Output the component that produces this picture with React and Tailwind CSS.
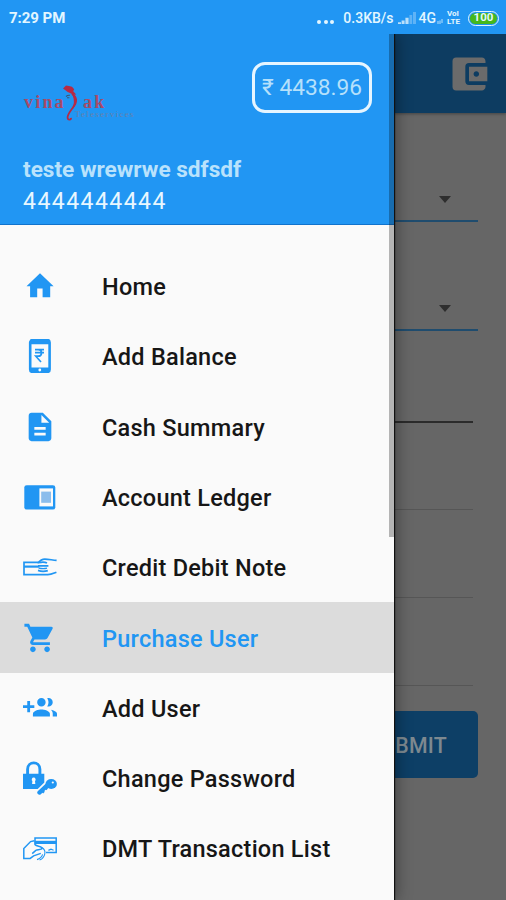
import React from 'react'
import { MdAccountBalanceWallet, MdDescription, MdShoppingCart } from 'react-icons/md'

function HomeIcon() {
  return (
    <svg viewBox="0 0 34 34" className="size-[34px]" fill="currentColor">
      <path d="M14.2 28.2v-8.6h5.4v8.6h7.6V17.3h3.4L17 4.2 3.5 17.3h3.6v10.9z" />
    </svg>
  )
}

function PhoneRupeeIcon() {
  return (
    <svg viewBox="0 0 34 34" className="size-[34px]" fill="none" stroke="currentColor">
      <rect x="7.2" y="1.1" width="19.4" height="31.8" rx="2.4" strokeWidth="2.6" />
      <path d="M7 3h20M7 30.6h20" strokeWidth="4.4" />
      <path d="M12 10.6h9M12 13.6h9M12.6 10.6h2.6c4.4 0 4.4 6.6 0 6.6h-2.4l5.2 5.8" strokeWidth="1.7" />
      <circle cx="16.8" cy="31" r="1.4" fill="#fafafa" stroke="none" />
    </svg>
  )
}

function LedgerIcon() {
  return (
    <svg viewBox="0 0 34 34" className="size-[34px]">
      <rect x="1.3" y="5.2" width="31" height="24.4" rx="2.4" fill="currentColor" />
      <rect x="16.4" y="8.4" width="13.6" height="18" fill="#fafafa" />
      <rect x="18.2" y="11.6" width="9.8" height="11.2" fill="#8bbdec" />
    </svg>
  )
}

function CardHandIcon() {
  return (
    <svg viewBox="0 0 34 34" className="size-[34px]" fill="none" stroke="currentColor" strokeWidth="1.7">
      <path d="M15.5 12.3H1v12.3h23.6c3 .1 5-.9 8.8-2.4" />
      <path d="M1 16.6h15.4" strokeWidth="2.2" />
      <path d="M14.6 13.3c2.6-3 4.4-4.2 7.2-4.2 4 0 7.4 1 11.8 1.3" />
      <path d="M16 12.6c3-.8 5.4-1 8 .4M15 15.8h10.4M15 20.4c3.2 1.2 6.6 1.2 9.8.2" />
      <path d="M15.6 18.2c3 .6 5.6.8 8.4 0" strokeWidth="1.2" />
    </svg>
  )
}

function GroupAddIcon() {
  return (
    <svg viewBox="0 0 24 24" className="size-[34px]" fill="currentColor">
      <path d="M8 10H5V7H3v3H0v2h3v3h2v-3h3v-2zm10 1c1.66 0 2.99-1.34 2.99-3S19.66 5 18 5c-.32 0-.63.05-.91.14.57.81.9 1.79.9 2.86s-.34 2.04-.9 2.86c.28.09.59.14.91.14zm-5 0c1.66 0 2.99-1.34 2.99-3S14.66 5 13 5c-1.66 0-3 1.34-3 3s1.34 3 3 3zm6.62 2.16c.83.73 1.38 1.66 1.38 2.84v2h3v-2c0-1.54-2.37-2.49-4.38-2.84zM13 13c-2 0-6 1-6 3v2h12v-2c0-2-4-3-6-3z" />
    </svg>
  )
}

function LockKeyIcon() {
  return (
    <svg viewBox="0 0 34 34" className="size-[34px]">
      <path d="M4.6 13V8.2c0-8.4 12.3-8.4 12.3 0V13" fill="none" stroke="currentColor" strokeWidth="2.9" />
      <path d="M0 12.8h21.3v8.6l-6.6 6.6H0z" fill="currentColor" />
      <path d="M10.7 16.6a2 2 0 0 1 1.3 3.5l.3 2.9H9.1l.3-2.9a2 2 0 0 1 1.3-3.5z" fill="#fafafa" />
      <path d="M26 22.6 16.4 31.6" stroke="currentColor" strokeWidth="4.2" strokeLinecap="round" />
      <path d="m19 29.6 2 2M22.4 26.6l1.8 1.8" stroke="currentColor" strokeWidth="2.4" />
      <ellipse cx="28.2" cy="23" rx="5.7" ry="5" fill="currentColor" />
      <circle cx="29.8" cy="21.5" r="1.1" fill="#fafafa" />
    </svg>
  )
}

function TransferIcon() {
  return (
    <svg viewBox="0 0 34 34" className="size-[34px]" fill="none" stroke="currentColor" strokeWidth="1.5">
      <path d="M12 13V6h21.2v14.6H23" />
      <path d="M11.6 10.4h21.6" strokeWidth="3.2" />
      <path d="M11.4 8.7 7.6 9.6.8 16.6v9.8h6.4l3.4-2.6 7.2-2.4" />
      <path d="M12 12.6c2 2 5.4 1.2 6.8 3.2 1 1.8-3.4 1.8-6 2.6l-3.6 3.2" />
      <path d="M18.8 15.6c2.4 1.4 3.6 3.6 3 6.2-.6 2.8-2.6 5.2-5.2 6.2M14 27.6c3-.8 4.8-2.6 5.6-5.2" strokeWidth="1.1" />
      <path d="M25.4 18.4l2.6-1.2 2.6 1" strokeWidth="1.2" />
    </svg>
  )
}

const menuItems = [
  { label: 'Home', icon: <HomeIcon /> },
  { label: 'Add Balance', icon: <PhoneRupeeIcon /> },
  { label: 'Cash Summary', icon: <MdDescription className="size-[34px]" /> },
  { label: 'Account Ledger', icon: <LedgerIcon /> },
  { label: 'Credit Debit Note', icon: <CardHandIcon /> },
  { label: 'Purchase User', icon: <MdShoppingCart className="size-[34px]" />, active: true },
  { label: 'Add User', icon: <GroupAddIcon /> },
  { label: 'Change Password', icon: <LockKeyIcon /> },
  { label: 'DMT Transaction List', icon: <TransferIcon /> },
]

function StatusBar() {
  return (
    <div className="h-[34px] shrink-0 bg-[#2196f3] flex items-center justify-between pl-[9px] pr-[7px] pt-[2px] text-[#e3f6ff] font-bold">
      <span className="text-[15px] tracking-[-0.05px]">7:29 PM</span>
      <div className="flex items-center">
        <div className="flex gap-[2.5px] mr-[9px] mt-[8px]">
          <span className="size-[4px] rounded-full bg-[#e3f6ff]"></span>
          <span className="size-[4px] rounded-full bg-[#e3f6ff]"></span>
          <span className="size-[4px] rounded-full bg-[#e3f6ff]"></span>
        </div>
        <span className="text-[14px] font-medium">0.3KB/s</span>
        <svg viewBox="0 0 18 12" className="w-[18px] h-[12px] ml-[4px] mr-[3px]">
          <path d="M0 12v-1.8h3V12zM3.6 12V8.4h3V12zM7.4 12V5.8h3.2V12z" fill="#b9e0fb" />
          <path d="M11.4 12V3h2.8v9zM15 12V0h3v12z" fill="#5fb3f6" />
        </svg>
        <span className="text-[14px] font-medium">4G</span>
        <svg viewBox="0 0 6 5" className="w-[6px] h-[5px] ml-[1px] mr-[4px] mt-[7px]" stroke="#b9e0fb" fill="none">
          <path d="M1 5V2M3 5V1.5M5 4V0" />
        </svg>
        <div className="w-[15px] mr-[6px] text-[8px] leading-none">
          <p>VoI</p>
          <p>LTE</p>
        </div>
        <div className="w-[31px] h-[15px] rounded-full border-[1.5px] border-[#dff5ff] p-px">
          <div className="h-full rounded-full bg-[#45b81c] flex items-center justify-center text-[11.5px] leading-none">100</div>
        </div>
      </div>
    </div>
  )
}

function Logo() {
  return (
    <div className="relative w-[116px] h-[40px] text-[#a84a68]" style={{ fontFamily: '"Liberation Serif", serif' }}>
      <span className="absolute left-[1px] top-[8px] text-[18px] leading-[20px] tracking-[2.2px] font-bold">vina</span>
      <span className="absolute left-[60px] top-[8px] text-[18px] leading-[20px] tracking-[2.2px] font-bold">ak</span>
      <span className="absolute left-[52px] top-[26px] text-[8.5px] leading-[9px] tracking-[1.5px] text-[#6b7fa8]">Teleservices</span>
      <svg viewBox="0 0 20 40" className="absolute left-[39px] top-0 w-[20px] h-[40px]">
        <path d="M1 4.5 4 1.5l3 .5 3 .8 2.2 2.4-1 2 3 3.3-2.4.3C9 9 5.5 8.6 4.4 7z" fill="#b72a45" />
        <path d="M10 9.5c4.6 3.6 4 9.6.8 14.2C8 27.8 5.2 30.4 5.6 34c.4 2.4 3.6 2 3.4-.2" fill="none" stroke="#b72a45" strokeWidth="1.8" />
        <path d="M9.4 9c7.2 3 7.4 9.6 1.6 15.8 1.4-6 1.4-10.8-1.6-15.8z" fill="#b72a45" />
        <path d="M4 12.5c1.6-1.4 2.6-1.4 4-1.2M5 13.8h2.4" fill="none" stroke="#3b5573" strokeWidth="1.1" />
      </svg>
    </div>
  )
}

function Drawer() {
  return (
    <aside className="relative z-10 w-[394px] shrink-0 bg-[#fafafa] shadow-[1px_0_1px_#111,3px_0_14px_rgba(0,0,0,0.35)]">
      <div className="h-[191px] bg-[#2196f3] border-b border-[#1173cc] pl-[23px] pr-[22px]">
        <div className="flex justify-between pt-[27.5px]">
          <div className="pt-[22px]">
            <Logo />
          </div>
          <div className="w-[120px] h-[51px] rounded-[13px] border-[3px] border-[#e6f5ff] flex items-center justify-center pt-[3px] text-[22.7px] text-[#b5e0fb] whitespace-nowrap">
            ₹ 4438.96
          </div>
        </div>
        <p className="mt-[30px] text-[22.6px] leading-[32px] font-bold text-[#b9e2fc]">teste wrewrwe sdfsdf</p>
        <p className="mt-[1.5px] text-[23px] leading-[30px] text-[#e8f7ff] tracking-[1.45px]">4444444444</p>
      </div>
      <nav className="pt-[26px]">
        {menuItems.map((item) => (
          <div
            key={item.label}
            className={`h-[70.3px] flex items-center pl-[23px] ${item.active ? 'bg-[#dcdcdc] text-[#2196f3]' : 'text-[#161616]'}`}
          >
            <div className="w-[34px] mr-[45px] text-[#2196f3]">{item.icon}</div>
            <span className="text-[23.5px] font-medium tracking-[0.25px] whitespace-nowrap pt-[3px]">{item.label}</span>
          </div>
        ))}
      </nav>
      {/* scrollbar thumb */}
      <div className="absolute right-0 top-0 w-[5px] h-[503px] bg-black/28"></div>
    </aside>
  )
}

function SelectField() {
  return (
    <div className="w-[140px] h-[45px] border-b-2 border-[#1f4c6e] flex items-center justify-end pr-[27px] pt-[2px]">
      <span className="border-x-[6.5px] border-x-transparent border-t-[7px] border-t-[#2e2e2e]"></span>
    </div>
  )
}

function Page() {
  return (
    <main className="flex-1 bg-[#666666] overflow-hidden">
      <div className="h-[79px] bg-[#0d3c61] flex items-center justify-end pr-[15px] text-[#6b6b6b] shadow-[0_1px_3px_rgba(0,0,0,0.35)]">
        <MdAccountBalanceWallet className="size-[44px]" />
      </div>
      <div className="flex flex-col items-end pr-[28px]">
        <div className="mt-[64px]"><SelectField /></div>
        <div className="mt-[64px]"><SelectField /></div>
        <div className="w-[140px] mr-[5px] mt-[89.5px] h-[2px] bg-[#2b2b2b]"></div>
        <div className="w-[140px] mr-[5px] mt-[86.5px] h-px bg-[#565656]"></div>
        <div className="w-[140px] mr-[5px] mt-[87px] h-px bg-[#565656]"></div>
        <div className="w-[140px] mr-[5px] mt-[87px] h-px bg-[#565656]"></div>
        <button className="w-[140px] h-[67px] mt-[25px] rounded-[5px] bg-[#0d3f66] text-[#7d8990] text-[21.3px] font-medium pt-[3px] pr-[1px] tracking-[0.2px]">SUBMIT</button>
      </div>
    </main>
  )
}

export default function App() {
  return (
    <div
      className="w-[506px] h-[900px] flex flex-col overflow-hidden bg-[#666666]"
      style={{ fontFamily: 'Roboto, "Noto Sans", sans-serif' }}
    >
      <StatusBar />
      <div className="flex flex-1 min-h-0 overflow-hidden">
        <Drawer />
        <Page />
      </div>
    </div>
  )
}
